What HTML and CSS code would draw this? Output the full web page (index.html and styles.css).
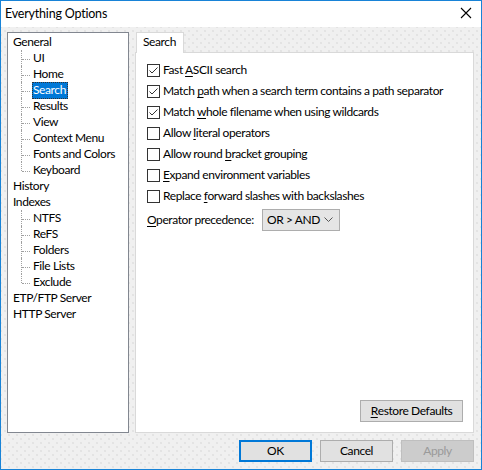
FILE: index.html
```html
<!DOCTYPE html>
<html>
<head>
<meta charset="utf-8">
<title>Everything Options</title>
<link rel="stylesheet" href="styles.css">
</head>
<body>
<div class="window">
  <div class="titlebar">
    <span class="title">Everything Options</span>
    <svg class="close" width="12" height="12" viewBox="0 0 12 12"><path d="M1 1 L11 11 M11 1 L1 11" stroke="#000" stroke-width="1.1" fill="none"/></svg>
  </div>
  <div class="body">
    <div class="main">
      <div class="tree">
        <div class="node">General</div>
        <div class="children">
          <div class="child"><span class="lbl">UI</span></div>
          <div class="child"><span class="lbl">Home</span></div>
          <div class="child"><span class="lbl sel">Search</span></div>
          <div class="child"><span class="lbl">Results</span></div>
          <div class="child"><span class="lbl">View</span></div>
          <div class="child"><span class="lbl">Context Menu</span></div>
          <div class="child"><span class="lbl">Fonts and Colors</span></div>
          <div class="child last"><span class="lbl">Keyboard</span></div>
        </div>
        <div class="node">History</div>
        <div class="node">Indexes</div>
        <div class="children">
          <div class="child"><span class="lbl">NTFS</span></div>
          <div class="child"><span class="lbl">ReFS</span></div>
          <div class="child"><span class="lbl">Folders</span></div>
          <div class="child"><span class="lbl">File Lists</span></div>
          <div class="child last"><span class="lbl">Exclude</span></div>
        </div>
        <div class="node">ETP/FTP Server</div>
        <div class="node">HTTP Server</div>
      </div>
      <div class="tabs">
        <div class="tabstrip">
          <div class="tab">Search</div>
        </div>
        <div class="panel">
          <div class="opt"><span class="box checked"><svg width="11" height="11" viewBox="0 0 11 11"><path d="M1.5 5.5 L4 8 L9.5 2.5" stroke="#333" stroke-width="1" fill="none"/></svg></span><span class="txt">Fast <u>A</u>SCII search</span></div>
          <div class="opt"><span class="box checked"><svg width="11" height="11" viewBox="0 0 11 11"><path d="M1.5 5.5 L4 8 L9.5 2.5" stroke="#333" stroke-width="1" fill="none"/></svg></span><span class="txt">Match <u>p</u>ath when a search term contains a path separator</span></div>
          <div class="opt"><span class="box checked"><svg width="11" height="11" viewBox="0 0 11 11"><path d="M1.5 5.5 L4 8 L9.5 2.5" stroke="#333" stroke-width="1" fill="none"/></svg></span><span class="txt">Match <u>w</u>hole filename when using wildcards</span></div>
          <div class="opt"><span class="box"></span><span class="txt">Allow <u>l</u>iteral operators</span></div>
          <div class="opt"><span class="box"></span><span class="txt">Allow round <u>b</u>racket grouping</span></div>
          <div class="opt"><span class="box"></span><span class="txt"><u>E</u>xpand environment variables</span></div>
          <div class="opt"><span class="box"></span><span class="txt">Replace <u>f</u>orward slashes with backslashes</span></div>
          <div class="prec">
            <span class="prec-label"><u>O</u>perator precedence:</span>
            <div class="combo"><span class="combo-text">OR &gt; AND</span><svg width="9" height="6" viewBox="0 0 9 6"><path d="M0.5 0.5 L4.5 4.5 L8.5 0.5" stroke="#555" stroke-width="1" fill="none"/></svg></div>
          </div>
          <div class="restore-row">
            <div class="btn restore"><u>R</u>estore Defaults</div>
          </div>
        </div>
      </div>
    </div>
    <div class="buttons">
      <div class="btn default">OK</div>
      <div class="btn">Cancel</div>
      <div class="btn disabled">Apply</div>
    </div>
  </div>
</div>
</body>
</html>
```
FILE: styles.css
```css
html, body {
  margin: 0;
  padding: 0;
  background: #f0f0f0;
}
body {
  font-family: "Lato", "Liberation Sans", sans-serif;
  font-size: 12px;
  letter-spacing: -0.4px;
  color: #000;
}
u { text-decoration: underline; text-underline-offset: 2px; }
.window {
  width: 482px;
  height: 470px;
  box-sizing: border-box;
  border: 1px solid #1883d7;
  display: flex;
  flex-direction: column;
  background-color: #f0f0f0;
}
.titlebar {
  height: 26px;
  background: #fff;
  display: flex;
  align-items: center;
  justify-content: space-between;
  padding: 0 9px 0 4px;
  flex: none;
}
.title {
  line-height: 16px;
  margin-top: -1px;
  font-size: 12.5px;
  letter-spacing: -0.2px;
}
.close { margin-top: -2px; }
.body {
  flex: 1;
  display: flex;
  flex-direction: column;
  padding: 5px 7px 7px 6px;
  background-color: #f0f0f0;
  background-image: radial-gradient(circle, #dcdcdc 0.6px, transparent 0.9px), radial-gradient(circle, #dcdcdc 0.6px, transparent 0.9px);
  background-size: 8px 8px, 8px 8px;
  background-position: 0 0, 4px 4px;
}
.main {
  display: flex;
  gap: 6px;
  height: 401px;
}
.tree {
  width: 122px;
  box-sizing: border-box;
  border: 1px solid #828790;
  background: #fff;
  padding: 1px 0 0 5px;
  flex: none;
}
.node, .child {
  height: 16px;
  line-height: 16px;
  white-space: nowrap;
}
.children {
  margin-left: 8px;
}
.child {
  position: relative;
  padding-left: 11px;
}
.child::before {
  content: "";
  position: absolute;
  left: 0;
  top: 0;
  height: 100%;
  border-left: 1px dotted #a0a0a0;
}
.child.last::before { height: 9px; }
.child::after {
  content: "";
  position: absolute;
  left: 1px;
  top: 9px;
  width: 8px;
  border-top: 1px dotted #a0a0a0;
}
.lbl {
  display: inline-block;
  height: 16px;
  line-height: 16px;
  padding: 0 1px;
  box-sizing: border-box;
}
.lbl.sel {
  background: #0078d7;
  color: #fff;
  outline: 1px dotted #333;
  outline-offset: -1px;
  height: 17px;
  padding: 0 2px 0 1px;
}
.tabs {
  flex: 1;
  min-width: 0;
  display: flex;
  flex-direction: column;
}
.tabstrip {
  height: 20px;
  display: flex;
  padding-left: 1px;
  position: relative;
  z-index: 1;
}
.tab {
  width: 48px;
  box-sizing: border-box;
  height: 21px;
  border: 1px solid #d9d9d9;
  border-bottom: none;
  background: #fff;
  padding-left: 6px;
  line-height: 18px;
}
.panel {
  flex: 1;
  min-width: 0;
  background: #fff;
  border: 1px solid #d9d9d9;
  padding: 7px 10px 10px 11px;
  display: flex;
  flex-direction: column;
}
.opt {
  height: 21px;
  display: flex;
  align-items: center;
  gap: 3px;
  white-space: nowrap;
}
.txt { margin-bottom: 2px; }
.box {
  width: 13px;
  height: 13px;
  box-sizing: border-box;
  border: 1px solid #333;
  background: #fff;
  display: flex;
  align-items: center;
  justify-content: center;
  flex: none;
}
.prec {
  margin-top: 2px;
  height: 22px;
  display: flex;
  align-items: center;
}
.prec-label { width: 115px; flex: none; white-space: nowrap; margin-bottom: 1px; }
.combo {
  width: 78px;
  height: 22px;
  box-sizing: border-box;
  border: 1px solid #adadad;
  background: #e5e5e5;
  display: flex;
  align-items: center;
  justify-content: space-between;
  padding: 0 6px 0 4px;
  flex: none;
}
.combo-text { white-space: nowrap; margin-bottom: 1px; }
.restore-row {
  margin-top: auto;
  display: flex;
  justify-content: flex-end;
}
.btn {
  height: 22px;
  box-sizing: border-box;
  border: 1px solid #adadad;
  background: #e1e1e1;
  display: flex;
  align-items: center;
  justify-content: center;
  width: 73px;
  flex: none;
  white-space: nowrap;
  padding-bottom: 1px;
}
.btn.restore { width: 103px; }
.buttons {
  margin-top: 7px;
  display: flex;
  justify-content: flex-end;
  gap: 8px;
}
.btn.default {
  border: 2px solid #0078d7;
}
.btn.disabled {
  background: #cccccc;
  border-color: #bfbfbf;
  color: #9a9a9a;
}
```
